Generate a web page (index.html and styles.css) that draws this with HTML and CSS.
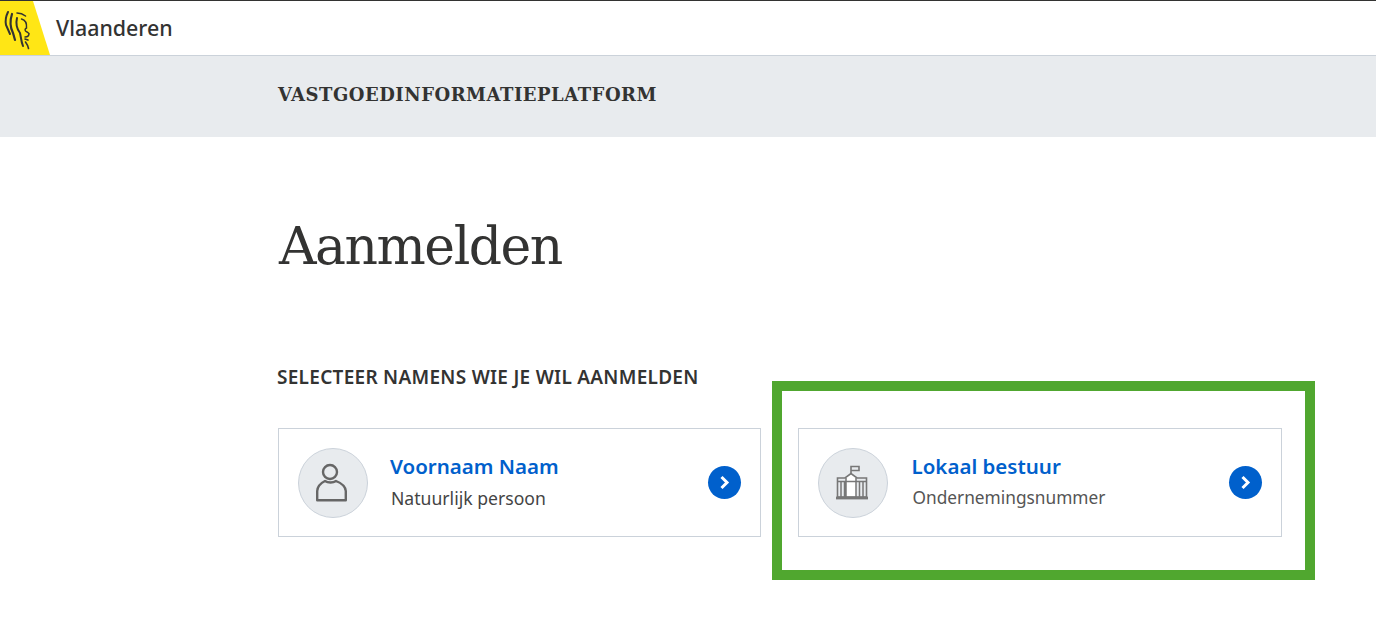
FILE: index.html
```html
<!DOCTYPE html>
<html lang="nl">
<head>
<meta charset="utf-8">
<title>Aanmelden</title>
<link rel="stylesheet" href="styles.css">
</head>
<body>
<header class="topbar">
  <a class="logo" href="#" aria-label="Vlaanderen">
    <svg class="lion" viewBox="0 0 50 54" width="50" height="54" aria-hidden="true">
      <polygon points="0,0 33,0 50,54 0,54" fill="#ffe615"/>
      <g fill="none" stroke="#333332" stroke-linecap="round">
        <path d="M8 11 C6 15 5 19 6 24 L10 33" stroke-width="2"/>
        <path d="M12 13 C10 19 10 26 13 32 L15 39" stroke-width="2.200"/>
        <path d="M17 12 C20 12 23 13 25.500 15" stroke-width="1.600"/>
        <path d="M17 17 C15.500 23 17 28 20 32 C21 36 21 40 23 45" stroke-width="2"/>
        <path d="M21.500 18 C25 19 27 22 26.500 27 C24.500 28 24.500 30 27 31 L29 32.500 C29 35 27 36 25 36" stroke-width="1.500"/>
        <path d="M25 38 L28 39 M25.500 41 C27 43 28 45 28.500 47.500" stroke-width="1.600"/>
      </g>
    </svg>
    <span class="logo-text">Vlaanderen</span>
  </a>
</header>
<div class="subbar">
  <div class="container"><span class="subbar-title">VASTGOEDINFORMATIEPLATFORM</span></div>
</div>
<main class="container main">
  <h1 class="title">Aanmelden</h1>
  <h2 class="subtitle">SELECTEER NAMENS WIE JE WIL AANMELDEN</h2>
  <div class="cards">
    <a class="card card-person" href="#">
      <span class="avatar">
        <svg viewBox="0 0 36 40" width="36" height="40" fill="none" stroke="#666" stroke-width="2.400" aria-hidden="true">
          <circle cx="15" cy="9" r="7"/>
          <path d="M10 18 C6 20 2.500 23 2.200 28 V37.300 H30.800 V28 C30.500 23 26 20 21 18 C18 20 13 20 10 18 Z" stroke-linejoin="round"/>
        </svg>
      </span>
      <span class="card-text">
        <span class="card-name">Voornaam Naam</span>
        <span class="card-desc">Natuurlijk persoon</span>
      </span>
      <span class="go">
        <svg viewBox="0 0 33 33" width="33" height="33" aria-hidden="true"><path d="M13.500 11 L19 16.500 L13.500 22" fill="none" stroke="#fff" stroke-width="3"/></svg>
      </span>
    </a>
    <a class="card card-org" href="#">
      <span class="avatar">
        <svg viewBox="0 0 36 36" width="36" height="36" fill="none" stroke="#777" aria-hidden="true">
          <path d="M11 13 H21 V31 H11 Z" fill="#fff" stroke="none"/>
          <path d="M10 13 L16 8.500 L22 13 Z" fill="#fff" stroke="none"/>
          <path d="M16 9 V1.500 H24 V5.500 H16" stroke-width="1.600"/>
          <path d="M2.500 13 H10 L16 8.500 L22 13 H31.500 V32 H2.500 Z" stroke-width="1.600"/>
          <path d="M2.500 16.500 H31.500" stroke-width="1.500"/>
          <path d="M6 16 V32 M9.500 16 V32 M11 13 V32 M21 13 V32 M24.500 16 V32 M28 16 V32" stroke-width="1.500"/>
          <path d="M1 33 H33" stroke-width="2.800"/>
        </svg>
      </span>
      <span class="card-text">
        <span class="card-name">Lokaal bestuur</span>
        <span class="card-desc">Ondernemingsnummer</span>
      </span>
      <span class="go">
        <svg viewBox="0 0 33 33" width="33" height="33" aria-hidden="true"><path d="M13.500 11 L19 16.500 L13.500 22" fill="none" stroke="#fff" stroke-width="3"/></svg>
      </span>
    </a>
  </div>
</main>
<div class="highlight"></div>
</body>
</html>
```
FILE: styles.css
```css
* { box-sizing: border-box; }
html, body { height: 100%; }
body {
  margin: 0;
  position: relative;
  overflow: hidden;
  background: #fff;
  color: #333332;
  font-family: "Noto Sans", "Open Sans", sans-serif;
}
a { text-decoration: none; color: inherit; }
.topbar {
  height: 56px;
  border-top: 1px solid #333332;
  border-bottom: 1px solid #cbd2da;
  background: #fff;
}
.logo { display: flex; align-items: center; height: 54px; }
.lion { flex: none; display: block; }
.logo-text {
  margin-left: 6px;
  font-size: 21.4px;
  font-weight: 500;
  position: relative;
  top: -1px;
}
.container { margin-left: 278px; }
.subbar { height: 81px; background: #e8ebee; padding-top: 26px; }
.subbar-title {
  display: block;
  font-family: "DejaVu Serif", serif;
  font-weight: 700;
  font-size: 18px;
  line-height: 26px;
  letter-spacing: 0.5px;
}
.main { width: 1004px; padding-top: 77px; }
.title {
  margin: 0 0 0 1px;
  font-family: "DejaVu Serif", serif;
  font-weight: 400;
  font-size: 52px;
  line-height: 64px;
  letter-spacing: -1.5px;
}
.subtitle {
  margin: 87px 0 0 -1px;
  font-size: 19px;
  line-height: 24px;
  font-weight: 600;
  letter-spacing: 0.28px;
}
.cards { display: flex; gap: 37px; margin-top: 39px; }
.card {
  flex: 0 0 483px;
  height: 109px;
  display: flex;
  align-items: center;
  padding: 0 19px;
  border: 1px solid #cbd2da;
  background: #fff;
}
.card-org { flex-basis: 484px; }
.avatar {
  flex: none;
  width: 70px;
  height: 70px;
  border-radius: 50%;
  background: #e8ebee;
  border: 1px solid #cbd2da;
  display: flex;
  align-items: center;
  justify-content: center;
}
.card-text { flex: 1; display: flex; flex-direction: column; }
.card-person .card-text { margin-left: 22px; }
.card-org .card-text { margin-left: 23.5px; }
.card-name {
  color: #0060cc;
  font-size: 20.5px;
  font-weight: 600;
  line-height: 30px;
  margin-top: -2px;
}
.card-desc {
  font-size: 17.6px;
  line-height: 24px;
  margin: 5px 0 2px 1px;
  color: #444;
}
.card-org .card-desc { font-size: 17.3px; color: #555; }
.go {
  flex: none;
  width: 33px;
  height: 33px;
  border-radius: 50%;
  background: #0060cc;
  display: block;
}
.go svg { display: block; }
.highlight {
  position: absolute;
  left: 772px;
  top: 381px;
  width: 543px;
  height: 199px;
  border: 10px solid #50a72f;
  pointer-events: none;
}
```
